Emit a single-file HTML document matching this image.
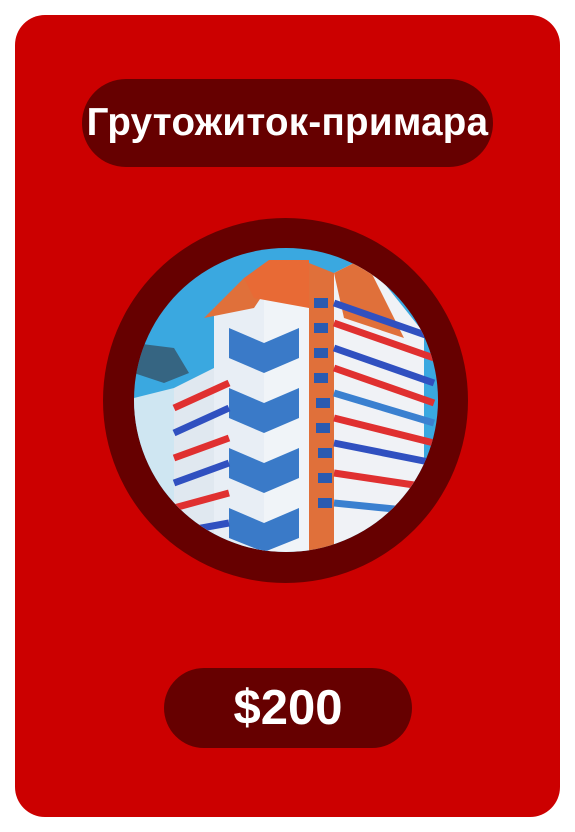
<!DOCTYPE html>
<html><head><meta charset="utf-8"><style>
html,body{margin:0;padding:0;background:#fff;width:575px;height:832px;overflow:hidden}
.card{position:absolute;left:15px;top:15px;width:545px;height:802px;background:#cc0000;border-radius:30px}
.pill{position:absolute;background:#660000;color:#fff;font-family:"Liberation Sans",sans-serif;font-weight:bold;text-align:center;white-space:nowrap}
.t{left:82px;top:79px;width:411px;height:88px;border-radius:44px;font-size:38.5px;line-height:88px;letter-spacing:0.3px}
.p{left:164px;top:668px;width:248px;height:80px;border-radius:40px;font-size:49px;line-height:80px}
.ring{position:absolute;left:103px;top:218px;width:365px;height:365px;border-radius:50%;background:#660000}
svg{position:absolute;left:134px;top:248px}
</style></head><body>
<div class="card"></div>
<div class="pill t">Грутожиток-примара</div>
<div class="ring"></div>
<svg width="304" height="304" viewBox="0 0 304 304">
<defs><clipPath id="c"><circle cx="152" cy="152" r="152"/></clipPath></defs>
<g clip-path="url(#c)">
<rect width="304" height="304" fill="#3aa8e0"/>
<polygon points="0,150 40,140 40,304 0,304" fill="#cfe6f2"/>
<polygon points="40,140 80,120 80,304 40,304" fill="#e0e8f0"/>
<polygon points="80,60 130,30 130,304 80,304" fill="#e8eef5"/>
<polygon points="130,30 150,15 175,15 175,304 130,304" fill="#f0f4f8"/>
<polygon points="175,15 200,25 200,304 175,304" fill="#e0703a"/>
<polygon points="70,70 110,30 130,45 120,60" fill="#e0703a"/>
<polygon points="110,30 135,12 175,12 175,60 120,50" fill="#e86a35"/>
<polygon points="200,25 230,10 290,85 290,304 200,304" fill="#f0f2f6"/>
<polygon points="200,25 230,10 270,90 210,70" fill="#e0703a"/>
<g fill="#3a7ac8">
<polygon points="95,80 130,95 165,80 165,110 130,125 95,110"/>
<polygon points="95,140 130,155 165,140 165,170 130,185 95,170"/>
<polygon points="95,200 130,215 165,200 165,230 130,245 95,230"/>
<polygon points="95,260 130,275 165,260 165,290 130,304 95,290"/>
</g>
<g fill="#2a5ab0">
<rect x="180" y="50" width="14" height="10"/><rect x="180" y="75" width="14" height="10"/><rect x="180" y="100" width="14" height="10"/><rect x="180" y="125" width="14" height="10"/><rect x="182" y="150" width="14" height="10"/><rect x="182" y="175" width="14" height="10"/><rect x="184" y="200" width="14" height="10"/><rect x="184" y="225" width="14" height="10"/><rect x="184" y="250" width="14" height="10"/>
</g>
<g stroke-width="7">
<line x1="200" y1="55" x2="300" y2="90" stroke="#3050c0"/><line x1="200" y1="75" x2="300" y2="110" stroke="#e03030"/>
<line x1="200" y1="100" x2="300" y2="135" stroke="#3050c0"/><line x1="200" y1="120" x2="300" y2="155" stroke="#e03030"/>
<line x1="200" y1="145" x2="300" y2="175" stroke="#3a80d0"/><line x1="200" y1="170" x2="300" y2="195" stroke="#e03030"/>
<line x1="200" y1="195" x2="300" y2="215" stroke="#3050c0"/><line x1="200" y1="225" x2="300" y2="240" stroke="#e03030"/>
<line x1="200" y1="255" x2="300" y2="265" stroke="#3a80d0"/>
<line x1="40" y1="160" x2="95" y2="135" stroke="#e03030"/><line x1="40" y1="185" x2="95" y2="160" stroke="#3050c0"/>
<line x1="40" y1="210" x2="95" y2="190" stroke="#e03030"/><line x1="40" y1="235" x2="95" y2="215" stroke="#3050c0"/>
<line x1="40" y1="260" x2="95" y2="245" stroke="#e03030"/><line x1="40" y1="285" x2="95" y2="275" stroke="#3050c0"/>
</g>
<polygon points="0,95 40,100 55,125 30,135 0,125" fill="#35485a" opacity="0.7"/>
</g>
</svg>
<div class="pill p">$200</div>
</body></html>
